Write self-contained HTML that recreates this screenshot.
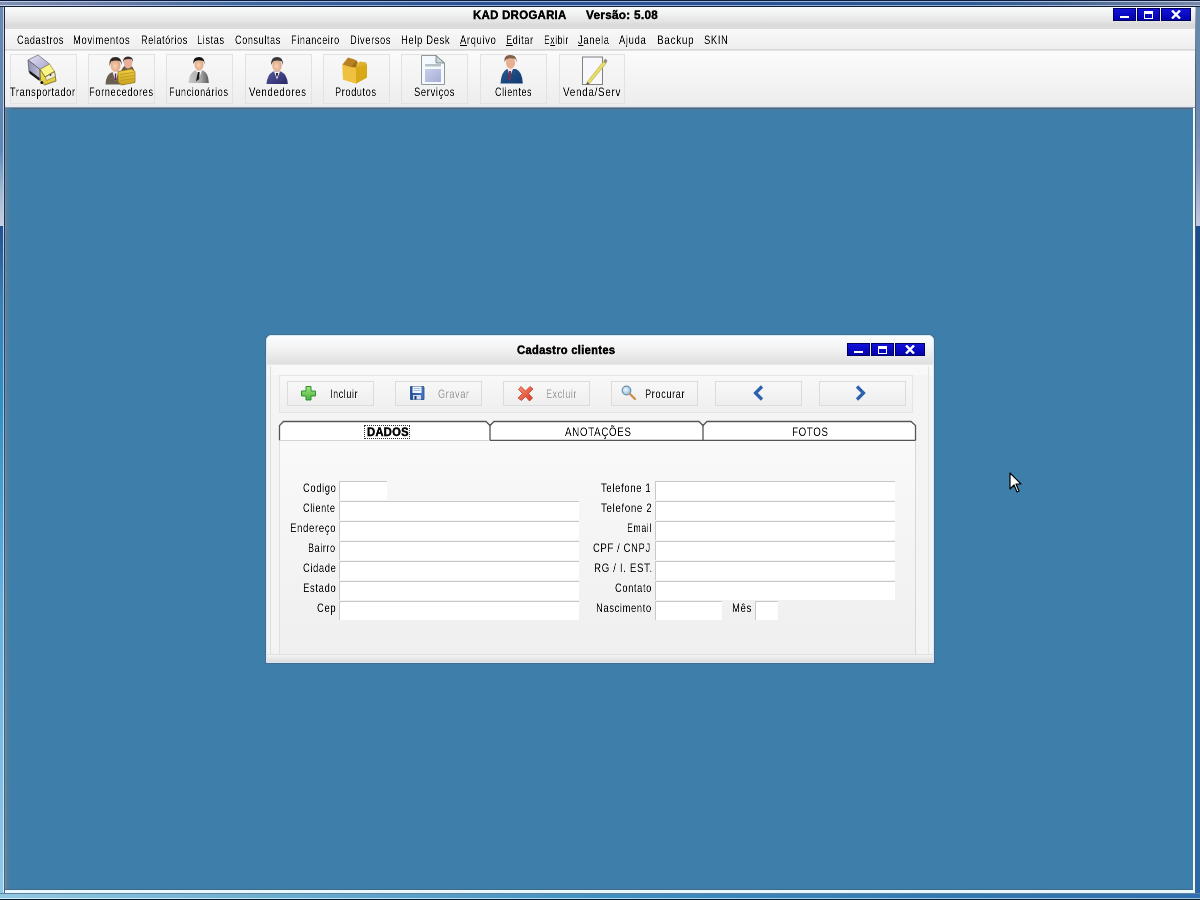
<!DOCTYPE html><html><head><meta charset="utf-8"><style>html,body{margin:0;padding:0}body{width:1200px;height:900px;position:relative;overflow:hidden;background:#3d7eaa;font-family:"Liberation Sans",sans-serif;-webkit-font-smoothing:antialiased}</style></head><body>
<div style="position:absolute;left:0px;top:0px;width:1200px;height:1px;background:#0c1c3a"></div>
<div style="position:absolute;left:0px;top:1px;width:1200px;height:1px;background:linear-gradient(90deg,#c0cce4 0%,#a8c0e8 15%,#98b8e0 50%,#a0bce4 85%,#c0c8e0 100%)"></div>
<div style="position:absolute;left:0px;top:2px;width:1200px;height:3px;background:linear-gradient(90deg,#8090b0 0%,#6c7ca4 8%,#40689a 20%,#2a5090 40%,#2a5090 60%,#2c5a90 80%,#4a6890 90%,#7888a8 100%)"></div>
<div style="position:absolute;left:0px;top:5px;width:1200px;height:1px;background:linear-gradient(90deg,#c8d4ec 0%,#90b0e0 20%,#90b0e0 80%,#b0c0e0 100%)"></div>
<div style="position:absolute;left:0px;top:6px;width:1200px;height:1px;background:#142030"></div>
<div style="position:absolute;left:0px;top:7px;width:3px;height:219px;background:linear-gradient(180deg,#6a88b0 0px,#6088b0 113px,#5a8ab8 143px,#a0b8d0 183px,#c8d0e0 219px)"></div>
<div style="position:absolute;left:0px;top:226px;width:3px;height:674px;background:linear-gradient(180deg,#205090 0px,#3a80b0 74px,#3090c0 174px,#68b0e0 374px,#90c8e8 100%)"></div>
<div style="position:absolute;left:3px;top:7px;width:1px;height:886px;background:linear-gradient(180deg,#c0d0e8 0px,#c0d0e8 219px,#90b8e0 293px,#b0e0f8 593px,#d0f0ff 100%)"></div>
<div style="position:absolute;left:4px;top:7px;width:1px;height:887px;background:linear-gradient(180deg,#202838 0px,#203868 293px,#405870 593px,#4a6070 100%)"></div>
<div style="position:absolute;left:1196px;top:7px;width:4px;height:219px;background:linear-gradient(180deg,#6a88a8 0px,#6888b0 100px,#8898c0 160px,#c0c8e0 219px)"></div>
<div style="position:absolute;left:1196px;top:226px;width:4px;height:674px;background:linear-gradient(180deg,#1a4a8a 0px,#2a68a8 274px,#2a68a8 100%)"></div>
<div style="position:absolute;left:1195px;top:7px;width:1px;height:887px;background:linear-gradient(180deg,#b0c0d8 0px,#8090a8 20px,#506070 60px,#506070 100%)"></div>
<div style="position:absolute;left:0px;top:893px;width:1200px;height:1px;background:#6080a0"></div>
<div style="position:absolute;left:0px;top:894px;width:1200px;height:4px;background:linear-gradient(90deg,#90c8e0 0%,#70b0d0 20%,#4090c0 50%,#3078b0 80%,#3070b0 100%)"></div>
<div style="position:absolute;left:0px;top:898px;width:1200px;height:1px;background:linear-gradient(90deg,#d0f0ff,#a0d0f0 70%,#a0c0e0)"></div>
<div style="position:absolute;left:0px;top:899px;width:1200px;height:1px;background:#0a1828"></div>
<div style="position:absolute;left:5px;top:7px;width:1190px;height:22px;background:linear-gradient(180deg,#f8fbfd 0%,#f0f0f0 35%,#e4e4e4 65%,#dadada 80%,#dcdcdc 100%)"></div>
<div style="position:absolute;left:472.60px;top:9.04px;line-height:24px;font-size:24px;letter-spacing:0.6px;white-space:nowrap;font-weight:bold;-webkit-text-stroke:0.9px #000;color:#000;transform:scale(0.4760,0.5);transform-origin:0 0;will-change:transform;">KAD DROGARIA</div>
<div style="position:absolute;left:586.40px;top:9.04px;line-height:24px;font-size:24px;letter-spacing:0.6px;white-space:nowrap;font-weight:bold;-webkit-text-stroke:0.9px #000;color:#000;transform:scale(0.4891,0.5);transform-origin:0 0;will-change:transform;">Versão: 5.08</div>
<div style="position:absolute;left:1113px;top:8px;width:23px;height:13px;background:linear-gradient(180deg,#1414e0,#0000a8);box-shadow:inset 0 0 0 1px #000060"></div>
<div style="position:absolute;left:1137px;top:8px;width:23px;height:13px;background:linear-gradient(180deg,#1414e0,#0000a8);box-shadow:inset 0 0 0 1px #000060"></div>
<div style="position:absolute;left:1161px;top:8px;width:30px;height:13px;background:linear-gradient(180deg,#1414e0,#0000a8);box-shadow:inset 0 0 0 1px #000060"></div>
<div style="position:absolute;left:1120px;top:16px;width:9px;height:2px;background:#fff"></div>
<div style="position:absolute;left:1144px;top:11px;width:9px;height:8px;border:1px solid #fff;border-top-width:3px;box-sizing:border-box"></div>
<svg style="position:absolute;left:1171px;top:10px" width="10" height="9" viewBox="0 0 10 9"><path d="M1 0.5 L9 8.5 M9 0.5 L1 8.5" stroke="#fff" stroke-width="2.4"/></svg>
<div style="position:absolute;left:5px;top:29px;width:1190px;height:20px;background:linear-gradient(180deg,#f8f8f8,#eeeeee)"></div>
<div style="position:absolute;left:5px;top:49px;width:1190px;height:1px;background:#d8d8d8"></div>
<div style="position:absolute;left:5px;top:50px;width:1190px;height:1px;background:#e2e2e2"></div>
<div style="position:absolute;left:16.70px;top:33.64px;line-height:24px;font-size:24px;letter-spacing:1.6px;white-space:nowrap;color:#000;transform:scale(0.3789,0.5);transform-origin:0 0;will-change:transform;">Cadastros</div>
<div style="position:absolute;left:73.30px;top:33.64px;line-height:24px;font-size:24px;letter-spacing:1.6px;white-space:nowrap;color:#000;transform:scale(0.3943,0.5);transform-origin:0 0;will-change:transform;">Movimentos</div>
<div style="position:absolute;left:140.50px;top:33.64px;line-height:24px;font-size:24px;letter-spacing:1.6px;white-space:nowrap;color:#000;transform:scale(0.3775,0.5);transform-origin:0 0;will-change:transform;">Relatórios</div>
<div style="position:absolute;left:197.00px;top:33.64px;line-height:24px;font-size:24px;letter-spacing:1.6px;white-space:nowrap;color:#000;transform:scale(0.3824,0.5);transform-origin:0 0;will-change:transform;">Listas</div>
<div style="position:absolute;left:234.70px;top:33.64px;line-height:24px;font-size:24px;letter-spacing:1.6px;white-space:nowrap;color:#000;transform:scale(0.3788,0.5);transform-origin:0 0;will-change:transform;">Consultas</div>
<div style="position:absolute;left:290.80px;top:33.64px;line-height:24px;font-size:24px;letter-spacing:1.6px;white-space:nowrap;color:#000;transform:scale(0.3813,0.5);transform-origin:0 0;will-change:transform;">Financeiro</div>
<div style="position:absolute;left:349.50px;top:33.64px;line-height:24px;font-size:24px;letter-spacing:1.6px;white-space:nowrap;color:#000;transform:scale(0.3872,0.5);transform-origin:0 0;will-change:transform;">Diversos</div>
<div style="position:absolute;left:400.80px;top:33.64px;line-height:24px;font-size:24px;letter-spacing:1.6px;white-space:nowrap;color:#000;transform:scale(0.3934,0.5);transform-origin:0 0;will-change:transform;">Help Desk</div>
<div style="position:absolute;left:460.00px;top:33.64px;line-height:24px;font-size:24px;letter-spacing:1.6px;white-space:nowrap;color:#000;transform:scale(0.3934,0.5);transform-origin:0 0;will-change:transform;"><u>A</u>rquivo</div>
<div style="position:absolute;left:506.00px;top:33.64px;line-height:24px;font-size:24px;letter-spacing:1.6px;white-space:nowrap;color:#000;transform:scale(0.3824,0.5);transform-origin:0 0;will-change:transform;"><u>E</u>ditar</div>
<div style="position:absolute;left:543.70px;top:33.64px;line-height:24px;font-size:24px;letter-spacing:1.6px;white-space:nowrap;color:#000;transform:scale(0.3574,0.5);transform-origin:0 0;will-change:transform;">E<u>x</u>ibir</div>
<div style="position:absolute;left:578.00px;top:33.64px;line-height:24px;font-size:24px;letter-spacing:1.6px;white-space:nowrap;color:#000;transform:scale(0.3934,0.5);transform-origin:0 0;will-change:transform;"><u>J</u>anela</div>
<div style="position:absolute;left:619.00px;top:33.64px;line-height:24px;font-size:24px;letter-spacing:1.6px;white-space:nowrap;color:#000;transform:scale(0.3953,0.5);transform-origin:0 0;will-change:transform;">Ajuda</div>
<div style="position:absolute;left:656.70px;top:33.64px;line-height:24px;font-size:24px;letter-spacing:1.6px;white-space:nowrap;color:#000;transform:scale(0.4159,0.5);transform-origin:0 0;will-change:transform;">Backup</div>
<div style="position:absolute;left:703.70px;top:33.64px;line-height:24px;font-size:24px;letter-spacing:1.6px;white-space:nowrap;color:#000;transform:scale(0.3914,0.5);transform-origin:0 0;will-change:transform;">SKIN</div>
<div style="position:absolute;left:5px;top:51px;width:1190px;height:56px;background:linear-gradient(180deg,#fbfbfb 0%,#f4f4f4 50%,#ececec 100%)"></div>
<div style="position:absolute;left:10px;top:54px;width:67px;height:50px;box-sizing:border-box;border:1px solid #e2e2e2;background:linear-gradient(180deg,#f8f8f8,#eeeeee)"></div>
<div style="position:absolute;left:10.00px;top:85.84px;line-height:24px;font-size:24px;letter-spacing:1.6px;white-space:nowrap;color:#000;transform:scale(0.3846,0.5);transform-origin:0 0;will-change:transform;">Transportador</div>
<div style="position:absolute;left:88px;top:54px;width:67px;height:50px;box-sizing:border-box;border:1px solid #e2e2e2;background:linear-gradient(180deg,#f8f8f8,#eeeeee)"></div>
<div style="position:absolute;left:89.00px;top:85.84px;line-height:24px;font-size:24px;letter-spacing:1.6px;white-space:nowrap;color:#000;transform:scale(0.3865,0.5);transform-origin:0 0;will-change:transform;">Fornecedores</div>
<div style="position:absolute;left:166px;top:54px;width:67px;height:50px;box-sizing:border-box;border:1px solid #e2e2e2;background:linear-gradient(180deg,#f8f8f8,#eeeeee)"></div>
<div style="position:absolute;left:169.00px;top:85.84px;line-height:24px;font-size:24px;letter-spacing:1.6px;white-space:nowrap;color:#000;transform:scale(0.3806,0.5);transform-origin:0 0;will-change:transform;">Funcionários</div>
<div style="position:absolute;left:245px;top:54px;width:67px;height:50px;box-sizing:border-box;border:1px solid #e2e2e2;background:linear-gradient(180deg,#f8f8f8,#eeeeee)"></div>
<div style="position:absolute;left:249.00px;top:85.84px;line-height:24px;font-size:24px;letter-spacing:1.6px;white-space:nowrap;color:#000;transform:scale(0.3997,0.5);transform-origin:0 0;will-change:transform;">Vendedores</div>
<div style="position:absolute;left:323px;top:54px;width:67px;height:50px;box-sizing:border-box;border:1px solid #e2e2e2;background:linear-gradient(180deg,#f8f8f8,#eeeeee)"></div>
<div style="position:absolute;left:335.00px;top:85.84px;line-height:24px;font-size:24px;letter-spacing:1.6px;white-space:nowrap;color:#000;transform:scale(0.3825,0.5);transform-origin:0 0;will-change:transform;">Produtos</div>
<div style="position:absolute;left:401px;top:54px;width:67px;height:50px;box-sizing:border-box;border:1px solid #e2e2e2;background:linear-gradient(180deg,#f8f8f8,#eeeeee)"></div>
<div style="position:absolute;left:413.60px;top:85.84px;line-height:24px;font-size:24px;letter-spacing:1.6px;white-space:nowrap;color:#000;transform:scale(0.3915,0.5);transform-origin:0 0;will-change:transform;">Serviços</div>
<div style="position:absolute;left:480px;top:54px;width:67px;height:50px;box-sizing:border-box;border:1px solid #e2e2e2;background:linear-gradient(180deg,#f8f8f8,#eeeeee)"></div>
<div style="position:absolute;left:494.70px;top:85.84px;line-height:24px;font-size:24px;letter-spacing:1.6px;white-space:nowrap;color:#000;transform:scale(0.3724,0.5);transform-origin:0 0;will-change:transform;">Clientes</div>
<div style="position:absolute;left:559px;top:54px;width:66px;height:50px;box-sizing:border-box;border:1px solid #e2e2e2;background:linear-gradient(180deg,#f8f8f8,#eeeeee)"></div>
<div style="position:absolute;left:563.30px;top:85.84px;line-height:24px;font-size:24px;letter-spacing:1.6px;white-space:nowrap;color:#000;transform:scale(0.4147,0.5);transform-origin:0 0;will-change:transform;">Venda/Serv</div>
<svg style="position:absolute;left:0;top:0" width="640" height="110" viewBox="0 0 640 110">
<defs>
<linearGradient id="gcargo" x1="0" y1="0" x2="1" y2="1"><stop offset="0" stop-color="#e0e0f4"/><stop offset="1" stop-color="#a8a8cc"/></linearGradient>
<linearGradient id="gside" x1="0" y1="0" x2="1" y2="0"><stop offset="0" stop-color="#9090b0"/><stop offset="1" stop-color="#c0c0dc"/></linearGradient>
<linearGradient id="gyel" x1="0" y1="0" x2="0" y2="1"><stop offset="0" stop-color="#f8f070"/><stop offset="1" stop-color="#d8c030"/></linearGradient>
<linearGradient id="gbox" x1="0" y1="0" x2="1" y2="1"><stop offset="0" stop-color="#f8d050"/><stop offset="1" stop-color="#d0a010"/></linearGradient>
<linearGradient id="gbox2" x1="0" y1="0" x2="0" y2="1"><stop offset="0" stop-color="#f0d040"/><stop offset="1" stop-color="#c8a020"/></linearGradient>
<radialGradient id="gface" cx="0.45" cy="0.55" r="0.6"><stop offset="0" stop-color="#f8d0b0"/><stop offset="1" stop-color="#d8a080"/></radialGradient>
<linearGradient id="gdoc" x1="0" y1="0" x2="1" y2="1"><stop offset="0" stop-color="#c8d0e8"/><stop offset="1" stop-color="#a8acd8"/></linearGradient>
<linearGradient id="ggray" x1="0" y1="0" x2="1" y2="0"><stop offset="0" stop-color="#c8c8c8"/><stop offset="0.6" stop-color="#a8a8a8"/><stop offset="1" stop-color="#585858"/></linearGradient>
<linearGradient id="gnavy" x1="0" y1="0" x2="1" y2="1"><stop offset="0" stop-color="#5858a0"/><stop offset="1" stop-color="#282868"/></linearGradient>
<linearGradient id="gblue" x1="0" y1="0" x2="1" y2="1"><stop offset="0" stop-color="#2a5a90"/><stop offset="1" stop-color="#103870"/></linearGradient>
</defs>
<!-- truck -->
<g stroke-linejoin="round">
<path d="M28 60 L38 55 L49.5 64 L40 69.5 Z" fill="url(#gcargo)" stroke="#707080" stroke-width="0.8"/>
<path d="M28 60 L40 69.5 L40 80 L29 72 Z" fill="url(#gside)" stroke="#606070" stroke-width="0.8"/>
<path d="M29.5 70.5 L39.5 78 L39.5 81 L29.5 73.5 Z" fill="#181818"/>
<path d="M40 69.5 L49.5 64 L54.5 71.5 L45 77 Z" fill="#f8f488" stroke="#807030" stroke-width="0.6"/>
<path d="M40 69.5 L45 77 L54.5 71.5 L56 81 L44.5 85 L40.5 80.5 Z" fill="url(#gyel)" stroke="#706020" stroke-width="0.8"/>
<path d="M45.5 77 L54.5 72 L55.2 76.5 L46.5 80.5 Z" fill="#f0f0e0" stroke="#706020" stroke-width="0.5"/>
<circle cx="41.8" cy="82.5" r="1.5" fill="#181818"/>
<circle cx="50.5" cy="75" r="0.9" fill="#303030"/>
</g>
<!-- fornecedores -->
<g>
<path d="M105.5 84.5 Q106 74 112.5 72 L119 72 Q124 74 124.5 84.5 Z" fill="#6a6050"/>
<path d="M112.5 72 L115.5 81 L118.5 72 Z" fill="#f4f0f0"/>
<path d="M114.8 73.5 L116.2 73.5 L116.2 80 L114.8 80 Z" fill="#602060"/>
<ellipse cx="115.5" cy="65.5" rx="5" ry="6.3" fill="url(#gface)"/>
<path d="M109.5 66 Q108.5 57 115.5 57 Q122 57 121.5 65 L120.5 61.5 Q116 59.5 111 61.5 Z" fill="#302820"/>
<path d="M121 72 Q122 66.5 126 65.5 L130.5 65.5 Q133.5 67 134 70 L134 72 Z" fill="#6a5a48"/>
<ellipse cx="128" cy="63" rx="4.2" ry="5.6" fill="#e8b098"/>
<path d="M123 63 Q122.5 56.5 128 56.5 Q133.5 56.5 133 62.5 L132 59.5 Q128 58.5 124 60 Z" fill="#382830"/>
<path d="M118 71.5 L131.5 69 L135 71.5 L135 82.5 L121.5 85 L118 82 Z" fill="url(#gbox2)" stroke="#907010" stroke-width="0.7"/>
<path d="M120 74.5 L134 72.5 M120 77.5 L134 75.5 M120.5 80.5 L134 78.5" stroke="#b89018" stroke-width="0.7"/>
</g>
<!-- funcionarios -->
<g>
<path d="M188.5 83 Q189 73 195 70.5 L203 70.5 Q208.5 73 208.8 83 Z" fill="url(#ggray)"/>
<path d="M196 70.5 L199 78.5 L202 70.5 Z" fill="#f4f4f4"/>
<path d="M197.8 72 L199.6 72 L199.2 79 L196 81.5 Z" fill="#181818"/>
<ellipse cx="199" cy="64.5" rx="4.5" ry="6.1" fill="url(#gface)"/>
<path d="M193.5 64 Q192.5 57 199 57 Q205 57 204.5 64.5 L203.5 61 Q199 59.5 195 61 Z" fill="#101010"/>
</g>
<!-- vendedores -->
<g>
<path d="M266.5 84 Q267 75 273 71.5 L281 71.5 Q287.5 75 287.8 84 Z" fill="url(#gnavy)"/>
<path d="M274 71.5 L277 79.5 L280 71.5 Z" fill="#f0f0f0"/>
<path d="M276 73 L278 73 L277.6 76.5 L276.4 76.5 Z" fill="#101010"/>
<ellipse cx="277" cy="65.5" rx="4.7" ry="6.2" fill="url(#gface)"/>
<path d="M271.3 65 Q270.5 57 277 57 Q283.5 57 282.8 65 L281.8 61.5 Q277 59.5 273 61.5 Z" fill="#383838"/>
</g>
<!-- produtos -->
<g>
<path d="M342.5 64.5 L355 61.5 L367 64.5 L367 77.5 L356 83.5 L343 79.5 Z" fill="url(#gbox)"/>
<path d="M356 67.5 L367 64.5 L367 77.5 L356 83.5 Z" fill="#d8a818"/>
<path d="M342.5 64.5 L356 67.5 L356 83.5 L343 79.5 Z" fill="#f0c040"/>
<path d="M342.5 64.5 L348 57.5 L356 60 L350.5 67 Z" fill="#b88020"/>
<path d="M350.5 67 L356 60 L357.5 62 L356 67.5 Z" fill="#a07018"/>
<path d="M356 67.5 L360 61.5 L366 62.5 L367 64.5 Z" fill="#e0b030"/>
</g>
<!-- servicos -->
<g>
<path d="M421.5 55.5 L436 55.5 L444.5 63 L444.5 84.5 L421.5 84.5 Z" fill="#f4f8ff" stroke="#909898" stroke-width="1"/>
<path d="M436 55.5 L436 63 L444.5 63 Z" fill="#c8d4e0" stroke="#707878" stroke-width="0.8"/>
<rect x="425" y="64" width="16" height="2.5" fill="#b8c0c8"/>
<rect x="425" y="69" width="16" height="13" fill="url(#gdoc)"/>
</g>
<!-- clientes -->
<g>
<path d="M500.5 83.5 Q501 72 507 69 L516 69 Q522.5 72 522.8 83.5 Z" fill="url(#gblue)"/>
<path d="M507.5 69 L510 76.5 L513 69 Z" fill="#f0e8f0"/>
<path d="M509 71 L511 71 L511 79 L508.5 80.5 Z" fill="#803050"/>
<ellipse cx="510.5" cy="62.5" rx="4.6" ry="6.2" fill="#e8b090"/>
<path d="M504.5 62 Q503.5 55 510.5 55 Q517 55 516.5 62.5 L515.5 59 Q510 57.5 506 59.5 Z" fill="#806048"/>
</g>
<!-- venda/serv -->
<g>
<rect x="582.5" y="57" width="20" height="27.5" fill="#f8f8fc" stroke="#808080" stroke-width="1"/>
<path d="M587 82 L603.5 61.5 L606 63.5 L589.5 83.5 Z" fill="#e8e060" stroke="#b0a040" stroke-width="0.6"/>
<path d="M603.5 61.5 L605 58.5 L607.5 60.5 L606 63.5 Z" fill="#909080"/>
<path d="M587 82 L586 85 L589.5 83.5 Z" fill="#606040"/>
</g>
</svg>

<div style="position:absolute;left:5px;top:105px;width:1190px;height:2px;background:linear-gradient(180deg,#eaecf0,#e0e6f0)"></div>
<div style="position:absolute;left:5px;top:107px;width:1190px;height:1px;background:#8898a8"></div>
<div style="position:absolute;left:5px;top:108px;width:1190px;height:1px;background:#4a6a88"></div>
<div style="position:absolute;left:5px;top:109px;width:1190px;height:2px;background:linear-gradient(180deg,#4a7898,#3e7ea8)"></div>
<div style="position:absolute;left:5px;top:108px;width:1px;height:782px;background:#6c8ca8"></div>
<div style="position:absolute;left:6px;top:108px;width:5px;height:782px;background:linear-gradient(90deg,#5a8098,#3d7eaa)"></div>
<div style="position:absolute;left:1193px;top:108px;width:2px;height:782px;background:#e8f8ff"></div>
<div style="position:absolute;left:5px;top:889px;width:1188px;height:1px;background:#406880"></div>
<div style="position:absolute;left:5px;top:890px;width:1190px;height:3px;background:#e8f8ff"></div>
<svg style="position:absolute;left:1009px;top:472px" width="14" height="22" viewBox="0 0 14 22"><path d="M1 1 L1 17 L5 13 L8 20 L10 19 L7 12 L12 12 Z" fill="#fff" stroke="#000" stroke-width="1.2" stroke-linejoin="round"/></svg>
<div style="position:absolute;left:265px;top:334px;width:670px;height:330px;border-radius:6px 6px 0 0;background:#4a6a88"></div>
<div style="position:absolute;left:266px;top:335px;width:668px;height:328px;box-sizing:border-box;border:1px solid #d0ecff;border-radius:5px 5px 0 0;background:#f4f4f4"></div>
<div style="position:absolute;left:267px;top:366px;width:666px;height:9px;background:#f8f8f8"></div>
<div style="position:absolute;left:267px;top:336px;width:666px;height:29px;border-radius:4px 4px 0 0;background:linear-gradient(180deg,#fafcfe 0%,#f2f2f2 45%,#dedede 100%)"></div>
<div style="position:absolute;left:267px;top:364px;width:666px;height:1px;background:#e8e8e8"></div>
<div style="position:absolute;left:267px;top:365px;width:666px;height:1px;background:#fafafa"></div>
<div style="position:absolute;left:516.50px;top:343.84px;line-height:24px;font-size:24px;letter-spacing:0.6px;white-space:nowrap;font-weight:bold;-webkit-text-stroke:0.9px #000;color:#000;transform:scale(0.4676,0.5);transform-origin:0 0;will-change:transform;">Cadastro clientes</div>
<div style="position:absolute;left:847px;top:343px;width:23px;height:13px;background:linear-gradient(180deg,#1414e0,#0000a8);box-shadow:inset 0 0 0 1px #000060"></div>
<div style="position:absolute;left:871px;top:343px;width:23px;height:13px;background:linear-gradient(180deg,#1414e0,#0000a8);box-shadow:inset 0 0 0 1px #000060"></div>
<div style="position:absolute;left:895px;top:343px;width:30px;height:13px;background:linear-gradient(180deg,#1414e0,#0000a8);box-shadow:inset 0 0 0 1px #000060"></div>
<div style="position:absolute;left:854px;top:351px;width:9px;height:2px;background:#fff"></div>
<div style="position:absolute;left:878px;top:346px;width:9px;height:8px;border:1px solid #fff;border-top-width:3px;box-sizing:border-box"></div>
<svg style="position:absolute;left:905px;top:345px" width="10" height="9" viewBox="0 0 10 9"><path d="M1 0.5 L9 8.5 M9 0.5 L1 8.5" stroke="#fff" stroke-width="2.4"/></svg>
<div style="position:absolute;left:270px;top:366px;width:1px;height:289px;background:#dcdcdc"></div>
<div style="position:absolute;left:928px;top:366px;width:1px;height:289px;background:#e4e4e4"></div>
<div style="position:absolute;left:267px;top:654px;width:666px;height:1px;background:#e0e0e0"></div>
<div style="position:absolute;left:267px;top:655px;width:666px;height:7px;background:linear-gradient(180deg,#f4f4f4,#dcdcdc)"></div>
<div style="position:absolute;left:279px;top:375px;width:634px;height:38px;box-sizing:border-box;border:1px solid #e4e4e4;background:linear-gradient(180deg,#f8f8f8,#efefef)"></div>
<div style="position:absolute;left:287px;top:381px;width:87px;height:25px;box-sizing:border-box;border:1px solid #dcdcdc;background:linear-gradient(180deg,#f8f8f8,#eeeeee)"></div>
<div style="position:absolute;left:329.50px;top:387.84px;line-height:24px;font-size:24px;letter-spacing:1.6px;white-space:nowrap;color:#000;transform:scale(0.3736,0.5);transform-origin:0 0;will-change:transform;">Incluir</div>
<div style="position:absolute;left:395px;top:381px;width:87px;height:25px;box-sizing:border-box;border:1px solid #dcdcdc;background:linear-gradient(180deg,#f8f8f8,#eeeeee)"></div>
<div style="position:absolute;left:438.00px;top:387.84px;line-height:24px;font-size:24px;letter-spacing:1.6px;white-space:nowrap;color:#9a9a9a;transform:scale(0.3808,0.5);transform-origin:0 0;will-change:transform;">Gravar</div>
<div style="position:absolute;left:503px;top:381px;width:87px;height:25px;box-sizing:border-box;border:1px solid #dcdcdc;background:linear-gradient(180deg,#f8f8f8,#eeeeee)"></div>
<div style="position:absolute;left:545.60px;top:387.84px;line-height:24px;font-size:24px;letter-spacing:1.6px;white-space:nowrap;color:#9a9a9a;transform:scale(0.3725,0.5);transform-origin:0 0;will-change:transform;">Excluir</div>
<div style="position:absolute;left:611px;top:381px;width:87px;height:25px;box-sizing:border-box;border:1px solid #dcdcdc;background:linear-gradient(180deg,#f8f8f8,#eeeeee)"></div>
<div style="position:absolute;left:645.30px;top:387.84px;line-height:24px;font-size:24px;letter-spacing:1.6px;white-space:nowrap;color:#000;transform:scale(0.3828,0.5);transform-origin:0 0;will-change:transform;">Procurar</div>
<div style="position:absolute;left:715px;top:381px;width:87px;height:25px;box-sizing:border-box;border:1px solid #dcdcdc;background:linear-gradient(180deg,#f8f8f8,#eeeeee)"></div>
<div style="position:absolute;left:819px;top:381px;width:87px;height:25px;box-sizing:border-box;border:1px solid #dcdcdc;background:linear-gradient(180deg,#f8f8f8,#eeeeee)"></div>
<svg style="position:absolute;left:290px;top:380px" width="600" height="30" viewBox="290 380 600 30">
<defs>
<linearGradient id="gplus" x1="0" y1="0" x2="0" y2="1"><stop offset="0" stop-color="#a0e880"/><stop offset="1" stop-color="#48b038"/></linearGradient>
<linearGradient id="gx" x1="0" y1="0" x2="1" y2="1"><stop offset="0" stop-color="#f89070"/><stop offset="1" stop-color="#d83820"/></linearGradient>
<linearGradient id="gfl" x1="0" y1="0" x2="1" y2="0"><stop offset="0" stop-color="#2050a0"/><stop offset="1" stop-color="#4878c0"/></linearGradient>
<radialGradient id="glens" cx="0.4" cy="0.4" r="0.6"><stop offset="0" stop-color="#f0f8ff"/><stop offset="1" stop-color="#90c0e8"/></radialGradient>
</defs>
<!-- plus -->
<path d="M306 386.5 L311 386.5 L311 391 L315.5 391 L315.5 396 L311 396 L311 400 L306 400 L306 396 L301.5 396 L301.5 391 L306 391 Z" fill="url(#gplus)" stroke="#309030" stroke-width="1"/>
<!-- floppy -->
<path d="M410.5 386.5 L423.5 386.5 L424 387 L424 399.5 L410.5 399.5 Z" fill="url(#gfl)" stroke="#204888" stroke-width="0.8"/>
<rect x="412.5" y="386.5" width="9" height="6.5" fill="#f4f8ff"/>
<path d="M413.5 388.5 H420.5 M413.5 390.5 H420.5" stroke="#90a8d0" stroke-width="0.8"/>
<rect x="413" y="395" width="8" height="4.5" fill="#d0dcec"/>
<rect x="414.5" y="396" width="2" height="3.5" fill="#203868"/>
<!-- red x -->
<path d="M518.5 389.5 L521 386.5 L525.5 391 L530 386.5 L533 389 L528.5 393.5 L532.5 398 L529.5 401 L525.5 396.5 L521.5 400.5 L518 398 L522.5 393.5 Z" fill="url(#gx)" stroke="#b83020" stroke-width="0.7"/>
<!-- magnifier -->
<circle cx="626.5" cy="390.5" r="4.3" fill="url(#glens)" stroke="#7090a8" stroke-width="1.2"/>
<path d="M630 394 L635 399" stroke="#d09050" stroke-width="2.4" stroke-linecap="round"/>
<!-- chevrons -->
<path d="M762 386.5 L755.5 393 L762 399.5" fill="none" stroke="#2a62b0" stroke-width="3.2" stroke-linejoin="miter"/>
<path d="M857 386.5 L863.5 393 L857 399.5" fill="none" stroke="#2a62b0" stroke-width="3.2" stroke-linejoin="miter"/>
</svg>

<svg style="position:absolute;left:278px;top:420px" width="640" height="24" viewBox="0 0 640 24"><path d="M1.5 20.5 L1.5 5.5 L5.5 1.5 L208 1.5 L212 5.5 L216 1.5 L421 1.5 L425 5.5 L429 1.5 L633 1.5 L637.5 5.5 L637.5 20.5" fill="#fff" stroke="#555" stroke-width="1.3"/><path d="M212 5.5 L212 20.5 M425 5.5 L425 20.5" stroke="#555" stroke-width="1.3"/><path d="M212 20.5 L637.5 20.5" stroke="#555" stroke-width="1.3"/><path d="M1.5 20.5 L212 20.5" stroke="#d4d4d4" stroke-width="1"/></svg>
<div style="position:absolute;left:366.70px;top:425.84px;line-height:24px;font-size:24px;letter-spacing:0.6px;white-space:nowrap;font-weight:bold;-webkit-text-stroke:0.9px #000;color:#000;transform:scale(0.4674,0.5);transform-origin:0 0;will-change:transform;">DADOS</div>
<div style="position:absolute;left:364px;top:425px;width:46px;height:14px;box-sizing:border-box;border:1px dotted #333"></div>
<div style="position:absolute;left:565.00px;top:425.84px;line-height:24px;font-size:24px;letter-spacing:1.6px;white-space:nowrap;color:#000;transform:scale(0.4079,0.5);transform-origin:0 0;will-change:transform;">ANOTAÇÕES</div>
<div style="position:absolute;left:792.00px;top:425.84px;line-height:24px;font-size:24px;letter-spacing:1.6px;white-space:nowrap;color:#000;transform:scale(0.4063,0.5);transform-origin:0 0;will-change:transform;">FOTOS</div>
<div style="position:absolute;left:279px;top:441px;width:1px;height:214px;background:#e0e0e0"></div>
<div style="position:absolute;left:915px;top:441px;width:1px;height:214px;background:#d8d8d8"></div>
<div style="position:absolute;left:280px;top:441px;width:635px;height:213px;background:linear-gradient(180deg,#fafafa,#f6f6f6 30%,#efefef)"></div>
<div style="position:absolute;left:302.50px;top:481.54px;line-height:24px;font-size:24px;letter-spacing:1.6px;white-space:nowrap;color:#000;transform:scale(0.3905,0.5);transform-origin:0 0;will-change:transform;">Codigo</div>
<div style="position:absolute;left:339px;top:481px;width:48px;height:19px;box-sizing:border-box;border-top:1px solid #c8c8c8;border-left:1px solid #c8c8c8;background:#fff"></div>
<div style="position:absolute;left:303.30px;top:501.54px;line-height:24px;font-size:24px;letter-spacing:1.6px;white-space:nowrap;color:#000;transform:scale(0.3791,0.5);transform-origin:0 0;will-change:transform;">Cliente</div>
<div style="position:absolute;left:339px;top:501px;width:240px;height:19px;box-sizing:border-box;border-top:1px solid #c8c8c8;border-left:1px solid #c8c8c8;background:#fff"></div>
<div style="position:absolute;left:289.70px;top:521.54px;line-height:24px;font-size:24px;letter-spacing:1.6px;white-space:nowrap;color:#000;transform:scale(0.4000,0.5);transform-origin:0 0;will-change:transform;">Endereço</div>
<div style="position:absolute;left:339px;top:521px;width:240px;height:19px;box-sizing:border-box;border-top:1px solid #c8c8c8;border-left:1px solid #c8c8c8;background:#fff"></div>
<div style="position:absolute;left:308.30px;top:541.54px;line-height:24px;font-size:24px;letter-spacing:1.6px;white-space:nowrap;color:#000;transform:scale(0.3750,0.5);transform-origin:0 0;will-change:transform;">Bairro</div>
<div style="position:absolute;left:339px;top:541px;width:240px;height:19px;box-sizing:border-box;border-top:1px solid #c8c8c8;border-left:1px solid #c8c8c8;background:#fff"></div>
<div style="position:absolute;left:302.50px;top:561.54px;line-height:24px;font-size:24px;letter-spacing:1.6px;white-space:nowrap;color:#000;transform:scale(0.3905,0.5);transform-origin:0 0;will-change:transform;">Cidade</div>
<div style="position:absolute;left:339px;top:561px;width:240px;height:19px;box-sizing:border-box;border-top:1px solid #c8c8c8;border-left:1px solid #c8c8c8;background:#fff"></div>
<div style="position:absolute;left:302.50px;top:581.54px;line-height:24px;font-size:24px;letter-spacing:1.6px;white-space:nowrap;color:#000;transform:scale(0.3961,0.5);transform-origin:0 0;will-change:transform;">Estado</div>
<div style="position:absolute;left:339px;top:581px;width:240px;height:19px;box-sizing:border-box;border-top:1px solid #c8c8c8;border-left:1px solid #c8c8c8;background:#fff"></div>
<div style="position:absolute;left:316.70px;top:601.54px;line-height:24px;font-size:24px;letter-spacing:1.6px;white-space:nowrap;color:#000;transform:scale(0.3941,0.5);transform-origin:0 0;will-change:transform;">Cep</div>
<div style="position:absolute;left:339px;top:601px;width:240px;height:19px;box-sizing:border-box;border-top:1px solid #c8c8c8;border-left:1px solid #c8c8c8;background:#fff"></div>
<div style="position:absolute;left:600.80px;top:481.54px;line-height:24px;font-size:24px;letter-spacing:1.6px;white-space:nowrap;color:#000;transform:scale(0.3970,0.5);transform-origin:0 0;will-change:transform;">Telefone 1</div>
<div style="position:absolute;left:655px;top:481px;width:240px;height:19px;box-sizing:border-box;border-top:1px solid #c8c8c8;border-left:1px solid #c8c8c8;background:#fff"></div>
<div style="position:absolute;left:600.80px;top:501.54px;line-height:24px;font-size:24px;letter-spacing:1.6px;white-space:nowrap;color:#000;transform:scale(0.4050,0.5);transform-origin:0 0;will-change:transform;">Telefone 2</div>
<div style="position:absolute;left:655px;top:501px;width:240px;height:19px;box-sizing:border-box;border-top:1px solid #c8c8c8;border-left:1px solid #c8c8c8;background:#fff"></div>
<div style="position:absolute;left:626.70px;top:521.54px;line-height:24px;font-size:24px;letter-spacing:1.6px;white-space:nowrap;color:#000;transform:scale(0.3660,0.5);transform-origin:0 0;will-change:transform;">Email</div>
<div style="position:absolute;left:655px;top:521px;width:240px;height:19px;box-sizing:border-box;border-top:1px solid #c8c8c8;border-left:1px solid #c8c8c8;background:#fff"></div>
<div style="position:absolute;left:593.30px;top:541.54px;line-height:24px;font-size:24px;letter-spacing:1.6px;white-space:nowrap;color:#000;transform:scale(0.3945,0.5);transform-origin:0 0;will-change:transform;">CPF / CNPJ</div>
<div style="position:absolute;left:655px;top:541px;width:240px;height:19px;box-sizing:border-box;border-top:1px solid #c8c8c8;border-left:1px solid #c8c8c8;background:#fff"></div>
<div style="position:absolute;left:593.70px;top:561.54px;line-height:24px;font-size:24px;letter-spacing:1.6px;white-space:nowrap;color:#000;transform:scale(0.4037,0.5);transform-origin:0 0;will-change:transform;">RG / I. EST.</div>
<div style="position:absolute;left:655px;top:561px;width:240px;height:19px;box-sizing:border-box;border-top:1px solid #c8c8c8;border-left:1px solid #c8c8c8;background:#fff"></div>
<div style="position:absolute;left:614.70px;top:581.54px;line-height:24px;font-size:24px;letter-spacing:1.6px;white-space:nowrap;color:#000;transform:scale(0.3878,0.5);transform-origin:0 0;will-change:transform;">Contato</div>
<div style="position:absolute;left:655px;top:581px;width:240px;height:19px;box-sizing:border-box;border-top:1px solid #c8c8c8;border-left:1px solid #c8c8c8;background:#fff"></div>
<div style="position:absolute;left:595.80px;top:601.54px;line-height:24px;font-size:24px;letter-spacing:1.6px;white-space:nowrap;color:#000;transform:scale(0.3909,0.5);transform-origin:0 0;will-change:transform;">Nascimento</div>
<div style="position:absolute;left:655px;top:601px;width:67px;height:19px;box-sizing:border-box;border-top:1px solid #c8c8c8;border-left:1px solid #c8c8c8;background:#fff"></div>
<div style="position:absolute;left:731.70px;top:601.54px;line-height:24px;font-size:24px;letter-spacing:1.6px;white-space:nowrap;color:#000;transform:scale(0.3971,0.5);transform-origin:0 0;will-change:transform;">Mês</div>
<div style="position:absolute;left:755px;top:601px;width:23px;height:19px;box-sizing:border-box;border-top:1px solid #c8c8c8;border-left:1px solid #c8c8c8;background:#fff"></div>
</body></html>
